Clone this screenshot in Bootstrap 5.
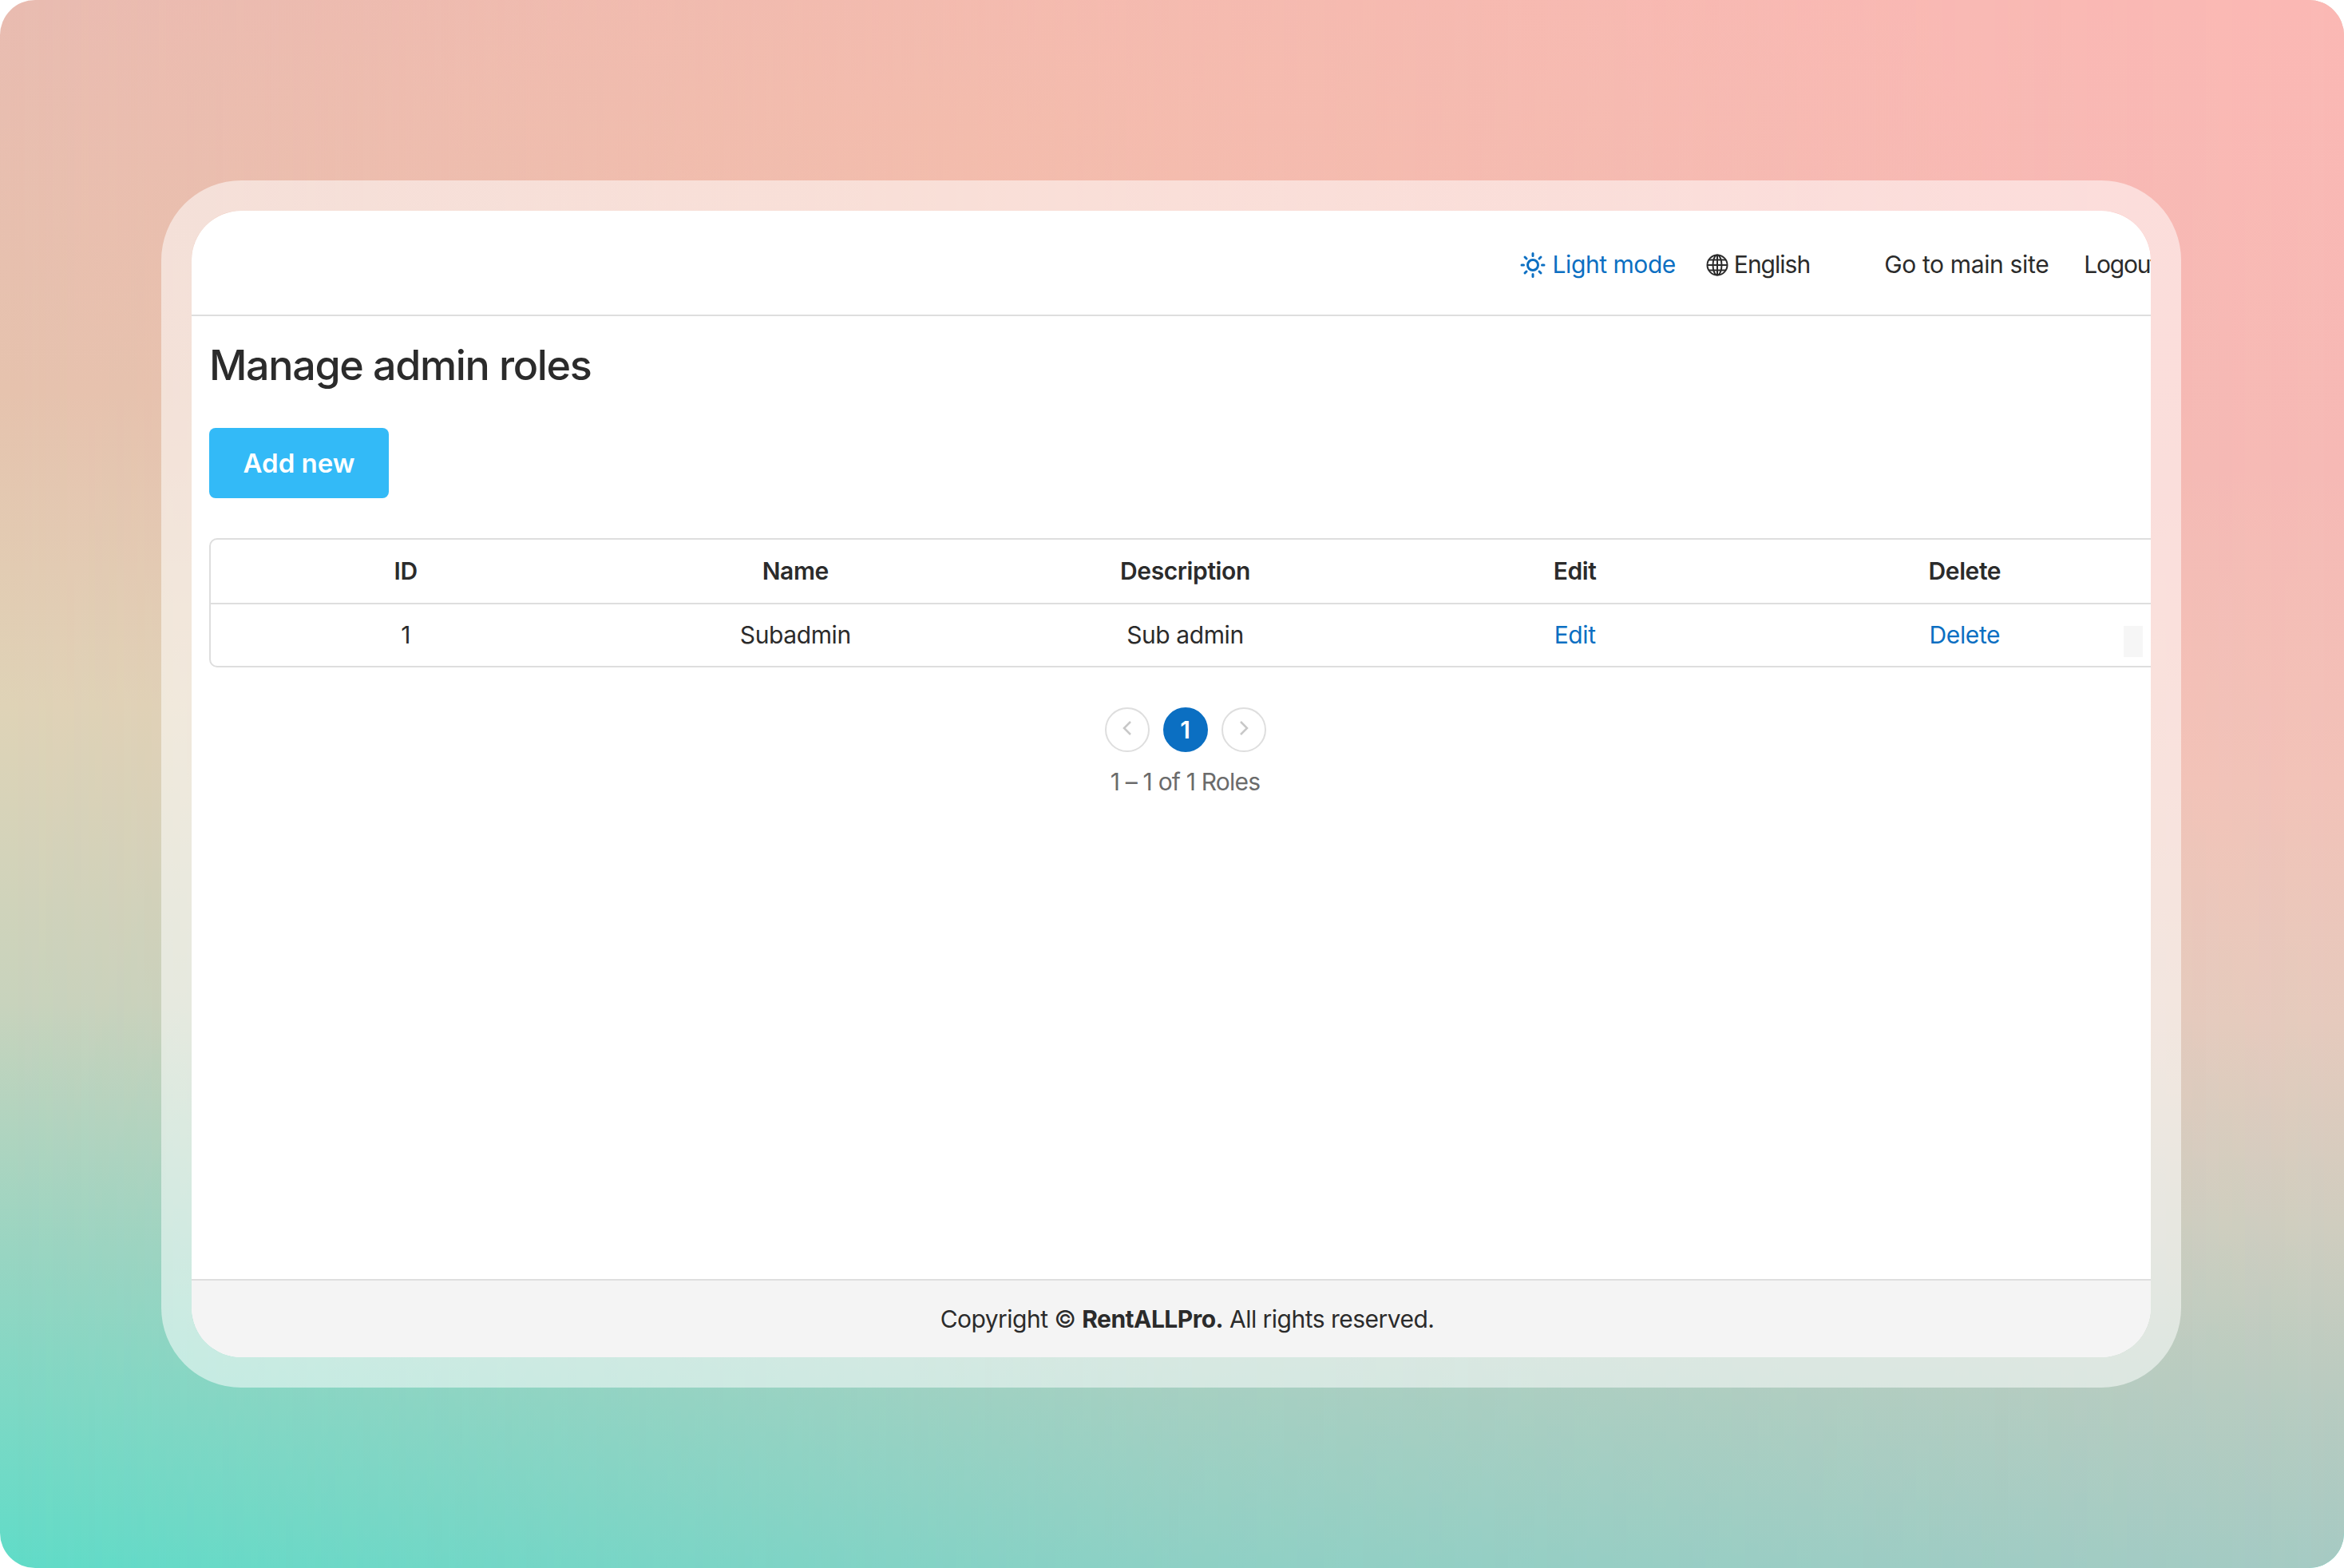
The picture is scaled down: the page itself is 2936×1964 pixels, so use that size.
<!DOCTYPE html>
<html lang="en">
<head>
<meta charset="utf-8">
<title>Manage admin roles</title>
<link href="https://cdn.jsdelivr.net/npm/bootstrap@5.3.0/dist/css/bootstrap.min.css" rel="stylesheet">
<style>
html,body{margin:0;background:#fff}
body{font-family:Inter,"Liberation Sans",sans-serif;color:#2b2b2b}
.stage{width:2936px;height:1964px;border-radius:44px;overflow:hidden;position:relative;padding-right:2px;
  background:linear-gradient(180deg,#e9bcb1 0%,#e6c3ae 25%,#dfd3b7 45%,#c8d3bd 64%,#98d5c2 80%,#60dcc8 100%)}
.stage::before{content:"";position:absolute;inset:0;
  background:linear-gradient(180deg,#fbb8b4 0%,#f6b9b5 30%,#f2c2b8 50%,#e6cabd 65%,#d0cdbf 78%,#bbcbc0 88%,#a6cac3 100%);
  -webkit-mask-image:linear-gradient(90deg,rgba(0,0,0,0) 0%,rgba(0,0,0,.65) 50%,#000 100%);mask-image:linear-gradient(90deg,rgba(0,0,0,0) 0%,rgba(0,0,0,.65) 50%,#000 100%)}
.stage::after{content:"";position:absolute;inset:0;background:radial-gradient(ellipse 1300px 520px at 42% 10%,rgba(246,190,165,.42),rgba(246,190,165,0))}
.frame-shell{position:relative;z-index:1;width:2530px;height:1512px;border:38px solid rgba(255,255,255,.52);border-radius:100px}
.frame-inner{width:100%;height:100%;background:#fff;border-radius:62px;overflow:hidden}
.app-canvas{width:2494px;height:100%;flex-shrink:0}
.top-head{height:132px;border-bottom:2px solid #dedede;padding:5px 32px 0 0;font-size:30px}
.top-head a{color:#2b2b2b;text-decoration:none;white-space:nowrap}
.top-head a.mode-link{color:#0b6fc2;letter-spacing:-.45px}
.mode-link{gap:9px;margin-right:38px}
.lang-link{gap:7px;margin-right:93px;letter-spacing:-1px}
.site-link{margin-right:44px;letter-spacing:-.35px}
.exit-link{letter-spacing:-1.2px}
.page-title{font-size:52px;font-weight:500;line-height:1.2;margin:0;padding:31px 0 0 22px;color:#2b2b2b;letter-spacing:-1.35px}
.add-btn{margin:47px 0 0 22px;width:225px;height:88px;background:#33baf7;border:0;border-radius:8px;color:#fff;font-size:33px;font-weight:600}
.add-btn:hover{background:#33baf7;color:#fff}
.roles-wrap{margin:50px 0 0 22px;width:2445px;border:2px solid #dedede;border-radius:10px;position:relative}
.roles-table{table-layout:fixed;width:100%;margin:0;font-size:30px;color:#2b2b2b;letter-spacing:-.4px}
.roles-table th,.roles-table td{text-align:center;padding:0;vertical-align:middle;border-color:#dedede}
.roles-table th{height:80px;font-weight:600;border-bottom-width:2px}
.roles-table td{height:78px;border-bottom:0}
.roles-table a{color:#0b6fc2;text-decoration:none}
.row-marker{position:absolute;left:2396px;top:108px;width:24px;height:39px;background:#f6f6f6}
.pager-row{gap:17px;margin-top:50px;width:2445px;margin-left:22px}
.pager-dot{width:56px;height:56px;border-radius:50%;border:2px solid #dedede;color:#c8c8c8;font-size:30px;background:#fff}
.pager-dot.on{background:#0b6fc2;border-color:#0b6fc2;color:#fff;font-weight:600}
.pager-note{width:2445px;margin-left:22px;font-size:30px;color:#6b6b6b;margin-top:15px;letter-spacing:-.8px}
.foot-bar{height:98px;border-top:2px solid #dedede;background:#f4f4f4;font-size:30px;color:#2b2b2b;letter-spacing:-.52px}
</style>
</head>
<body>
<div class="stage d-flex align-items-center justify-content-center">
  <div class="frame-shell">
    <div class="frame-inner d-flex">
      <div class="app-canvas d-flex flex-column">
        <header class="top-head d-flex align-items-center justify-content-end">
          <a href="#" class="mode-link d-flex align-items-center">
            <svg width="32" height="34" viewBox="0 0 32 34" fill="none" stroke="currentColor" stroke-width="3" stroke-linecap="round"><circle cx="16" cy="17" r="6.500"/><path d="M16 2.500v3M16 28.500v3M2 17h2.500M27.500 17H30M6 7l2 2M24 25l2 2M26 7l-2 2M8 25l-2 2"/></svg>
            <span>Light mode</span>
          </a>
          <a href="#" class="lang-link d-flex align-items-center">
            <svg width="28" height="28" viewBox="0 0 28 28" fill="none" stroke="currentColor" stroke-width="2"><circle cx="14" cy="14" r="12.500"/><ellipse cx="14" cy="14" rx="5.500" ry="12.500"/><path d="M14 1.500v25M1.500 14h25M3.500 7.500h21M3.500 20.500h21"/></svg>
            <span>English</span>
          </a>
          <a href="#" class="site-link">Go to main site</a>
          <a href="#" class="exit-link">Logout</a>
        </header>
        <main class="flex-grow-1">
          <h1 class="page-title">Manage admin roles</h1>
          <button type="button" class="btn add-btn d-block">Add new</button>
          <div class="roles-wrap">
            <table class="table roles-table">
              <thead><tr><th>ID</th><th>Name</th><th>Description</th><th>Edit</th><th>Delete</th></tr></thead>
              <tbody><tr><td>1</td><td>Subadmin</td><td>Sub admin</td><td><a href="#">Edit</a></td><td><a href="#">Delete</a></td></tr></tbody>
            </table>
            <div class="row-marker"></div>
          </div>
          <div class="pager-row d-flex justify-content-center">
            <div class="pager-dot d-flex align-items-center justify-content-center"><svg width="16" height="22" viewBox="0 0 16 22" fill="none" stroke="currentColor" stroke-width="2.500"><path d="M12 1 4 9l8 8"/></svg></div>
            <div class="pager-dot on d-flex align-items-center justify-content-center">1</div>
            <div class="pager-dot d-flex align-items-center justify-content-center"><svg width="16" height="22" viewBox="0 0 16 22" fill="none" stroke="currentColor" stroke-width="2.500"><path d="m4 1 8 8-8 8"/></svg></div>
          </div>
          <div class="pager-note text-center">1 – 1 of 1 Roles</div>
        </main>
        <footer class="foot-bar d-flex align-items-center justify-content-center">
          <span>Copyright © <strong>RentALLPro.</strong> All rights reserved.</span>
        </footer>
      </div>
    </div>
  </div>
</div>
<script src="https://cdn.jsdelivr.net/npm/bootstrap@5.3.0/dist/js/bootstrap.bundle.min.js"></script>
</body>
</html>
